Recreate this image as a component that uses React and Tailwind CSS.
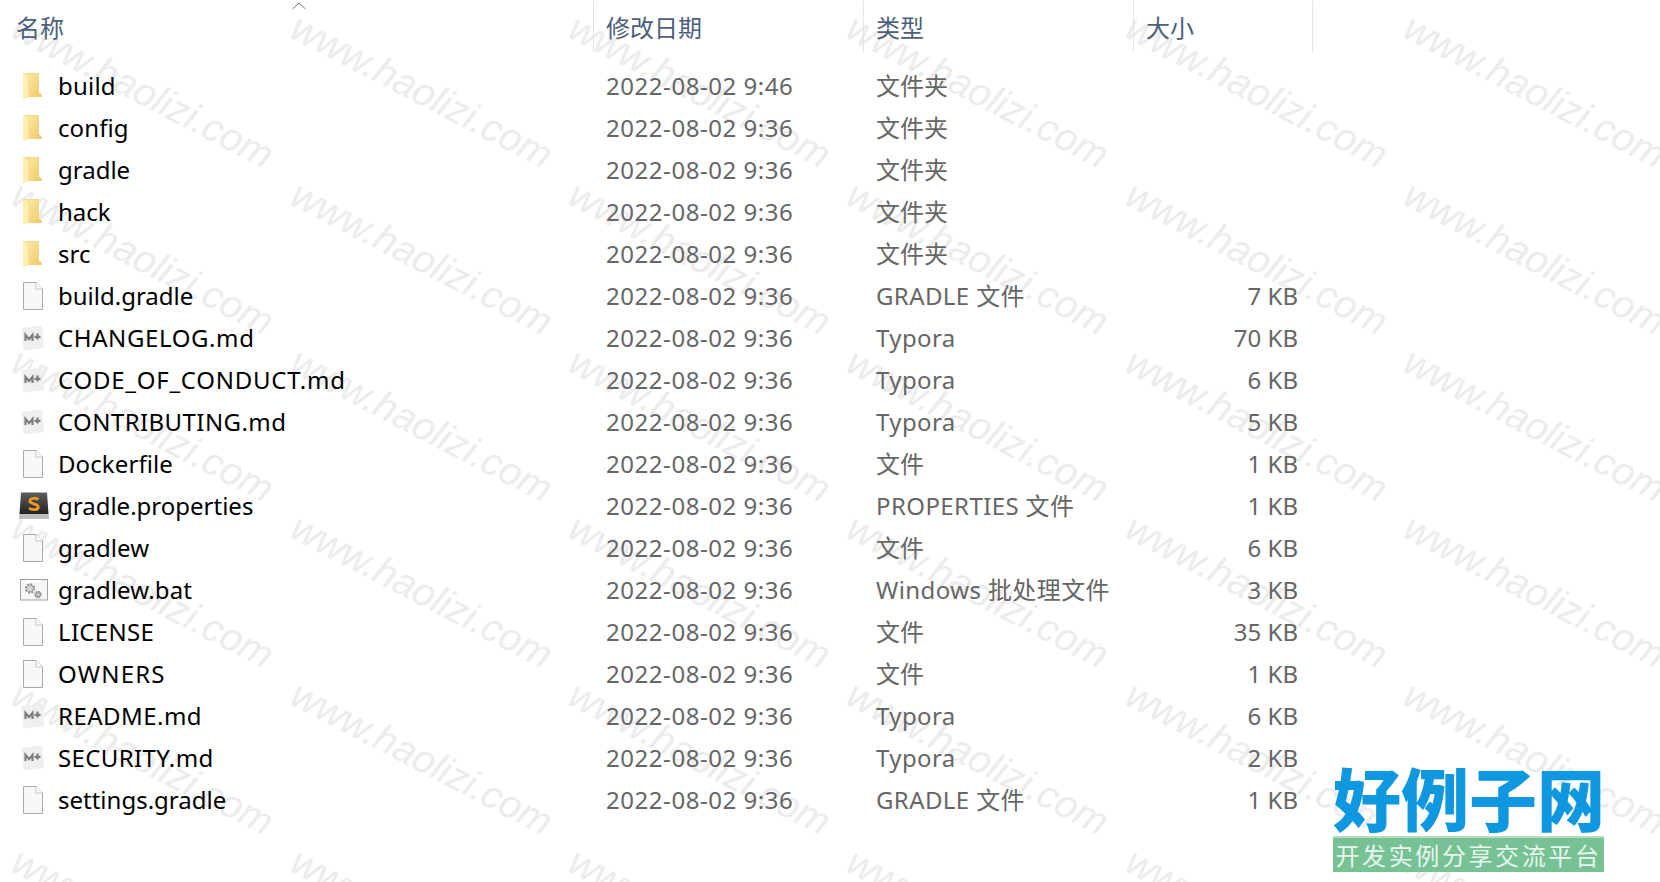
const sans = { fontFamily: '"Noto Sans","Noto Sans CJK SC",sans-serif' };
const rows = [
  ["build","f","2022-08-02 9:46","文件夹","","tracking-[0.2px]"],
  ["config","f","2022-08-02 9:36","文件夹","","tracking-[0.1px]"],
  ["gradle","f","2022-08-02 9:36","文件夹","","tracking-normal"],
  ["hack","f","2022-08-02 9:36","文件夹","","tracking-normal"],
  ["src","f","2022-08-02 9:36","文件夹","","tracking-normal"],
  ["build.gradle","d","2022-08-02 9:36","GRADLE 文件","7 KB","tracking-normal"],
  ["CHANGELOG.md","m","2022-08-02 9:36","Typora","70 KB","tracking-[0.6px]"],
  ["CODE_OF_CONDUCT.md","m","2022-08-02 9:36","Typora","6 KB","tracking-[0.75px]"],
  ["CONTRIBUTING.md","m","2022-08-02 9:36","Typora","5 KB","tracking-[0.42px]"],
  ["Dockerfile","d","2022-08-02 9:36","文件","1 KB","tracking-[0.1px]"],
  ["gradle.properties","s","2022-08-02 9:36","PROPERTIES 文件","1 KB","tracking-normal"],
  ["gradlew","d","2022-08-02 9:36","文件","6 KB","tracking-[0.1px]"],
  ["gradlew.bat","b","2022-08-02 9:36","Windows 批处理文件","3 KB","tracking-[0.1px]"],
  ["LICENSE","d","2022-08-02 9:36","文件","35 KB","tracking-[0.3px]"],
  ["OWNERS","d","2022-08-02 9:36","文件","1 KB","tracking-[1.2px]"],
  ["README.md","m","2022-08-02 9:36","Typora","6 KB","tracking-[0.47px]"],
  ["SECURITY.md","m","2022-08-02 9:36","Typora","2 KB","tracking-[0.38px]"],
  ["settings.gradle","d","2022-08-02 9:36","GRADLE 文件","1 KB","tracking-normal"],
];
function Gear({ cx, cy, r, fill, stroke }) {
  return (
    <g>
      <circle cx={cx} cy={cy} r={r} fill={fill} stroke={stroke} strokeWidth={r * 0.5} strokeDasharray={`${r * 0.42} ${r * 0.36}`} />
      <circle cx={cx} cy={cy} r={r * 0.8} fill="none" stroke={stroke} strokeWidth=".7" />
      <circle cx={cx} cy={cy} r={r * 0.35} fill="#fff" stroke={stroke} strokeWidth=".6" />
    </g>
  );
}
function Icon({ t }) {
  if (t === "f") return (
    <svg width="24" height="28" viewBox="0 0 24 28" className="ml-[19px]">
      <defs><linearGradient id="fg" x1="0" x2="1" y1="0" y2="1"><stop offset="0" stopColor="#fbe7a1"/><stop offset="1" stopColor="#eec766"/></linearGradient></defs>
      <path d="M4 1H20V21L22.500 23V25H9L4 27Z" fill="#f5d98a"/>
      <path d="M10 2H19.500V20L22.500 22.500V25H9.500Z" fill="url(#fg)"/>
      <path d="M4 1L9.500 3.500V24.500L4 27Z" fill="#fdeeb2"/>
      <path d="M9.500 3.500V24.500" stroke="#f2dd9c" strokeWidth=".6"/>
    </svg>
  );
  if (t === "d") return (
    <svg width="24" height="28" viewBox="0 0 24 28" className="ml-[19px]">
      <path d="M4.500 .5H17L23.500 7V27.500H4.500Z" fill="#f8f8f8" stroke="#a8a8a8"/>
      <path d="M17 .5V7H23.500" fill="#fff" stroke="#c4c4c4"/>
    </svg>
  );
  if (t === "m") return (
    <svg width="26" height="28" viewBox="0 0 26 28" className="ml-[19px] -mr-[2px]">
      <path d="M2.500 4L23 1.500L25 24L4.500 26.500Z" fill="#efefef"/>
      <path d="M6.500 17V11L10 15L13.500 11V17M18.500 9.500V15.500M15.500 12.800H21.500" fill="none" stroke="#7f7f7f" strokeWidth="2.200"/>
    </svg>
  );
  if (t === "s") return (
    <svg width="32" height="30" viewBox="0 0 32 30" className="ml-[18px] -mr-[8px]">
      <defs><linearGradient id="sg" x1="0" x2="0" y1="0" y2="1"><stop offset="0" stopColor="#5e5e5e"/><stop offset="1" stopColor="#222"/></linearGradient></defs>
      <path d="M3 1.500H29L30.500 23H1.500Z" fill="url(#sg)"/>
      <path d="M1.500 23H30.500L31 28H1Z" fill="#bdbdbd"/>
      <path d="M20.500 8.500C18.500 6.800 12 6.500 11.800 10C11.700 13.500 20.500 12.200 20.300 16.200C20 19.500 13.500 19.200 11 17" fill="none" stroke="#f29a20" strokeWidth="2.800"/>
    </svg>
  );
  return (
    <svg width="28" height="22" viewBox="0 0 28 22" className="ml-[20px] -mr-[4px]">
      <rect x=".5" y=".5" width="27" height="20.500" fill="#f6f6f6" stroke="#a0a0a0"/>
      <path d="M1 2.500H27" stroke="#fff" strokeWidth="2"/>
      <path d="M22 2H26" stroke="#bbb" strokeWidth="1" strokeDasharray="1 1"/>
      <Gear cx={10} cy={9.500} r={4.200} fill="#e4e4e4" stroke="#8c8c8c" />
      <Gear cx={18} cy={15.500} r={3} fill="#dcdcdc" stroke="#808080" />
    </svg>
  );
}
const cols = [16, 294.500, 573, 851, 1129.500, 1408];
function Watermarks() {
  const marks = [];
  for (let r = 0; r < 6; r++) for (let c = 0; c < 6; c++) marks.push([c, r]);
  return (
    <div className="absolute inset-0 overflow-hidden pointer-events-none">
      {marks.map(([c, r]) => (
        <span key={c + "-" + r} className="absolute whitespace-nowrap text-[39px] italic text-[#ececec] leading-none origin-top-left rotate-[27.5deg]"
          style={{ left: cols[c] + 8, top: 7 + r * 166.8, fontFamily: '"Liberation Sans",sans-serif' }}>www.haolizi.com</span>
      ))}
    </div>
  );
}
const headerCls = "h-[51px] flex items-center pt-[2px] text-[24px] text-[#4c607a]";
export default function App() {
  return (
    <div className="relative w-[1660px] h-[882px] overflow-hidden bg-white" style={sans}>
      <Watermarks />
      <div className="relative">
        <div className="flex h-[52px] pt-px">
          <div className={headerCls + " w-[593px] pl-[16px] relative"}>
            名称
            <svg width="14" height="8" viewBox="0 0 14 8" className="absolute left-[292px] top-px"><path d="M.5 7L7 1L13.500 7" fill="none" stroke="#777"/></svg>
          </div>
          <div className={headerCls + " w-[270px] pl-[12px] border-l border-[#e5e5e5]"}>修改日期</div>
          <div className={headerCls + " w-[270px] pl-[12px] border-l border-[#e5e5e5]"}>类型</div>
          <div className={headerCls + " w-[180px] pl-[12px] border-x border-[#e5e5e5]"}>大小</div>
        </div>
        <div className="pt-[13px]">
          {rows.map((r) => (
            <div key={r[0]} className="flex items-center h-[42px] text-[24px] text-[#666666]">
              <div className="w-[595px] flex items-center">
                <div className="w-[58px] flex items-center shrink-0"><Icon t={r[1]} /></div>
                <span className={"text-black " + r[5]}>{r[0]}</span>
              </div>
              <div className="w-[270px] pl-[11px] tracking-[0.55px]">{r[2]}</div>
              <div className={"w-[269px] pl-[11px] " + (/[A-Za-z]/.test(r[3]) ? "tracking-[0.4px]" : "tracking-normal")}>{r[3]}</div>
              <div className="w-[164px] text-right">{r[4]}</div>
            </div>
          ))}
        </div>
      </div>
      <div className="absolute left-[1333px] top-[758px] w-[271px]">
        <div className="text-[68px] leading-[78px] font-black text-[#0f97df] whitespace-nowrap text-center" style={{ fontFamily: '"Noto Sans CJK SC",sans-serif' }}>好例子网</div>
        <div className="h-[36px] bg-[#76c295] border-t-2 border-[#b5dcc4] text-[24px] leading-[33px] text-[#e8f5ec] whitespace-nowrap text-center tracking-[2.6px]" style={{ fontFamily: '"Noto Sans CJK SC",sans-serif' }}>开发实例分享交流平台</div>
      </div>
    </div>
  );
}
